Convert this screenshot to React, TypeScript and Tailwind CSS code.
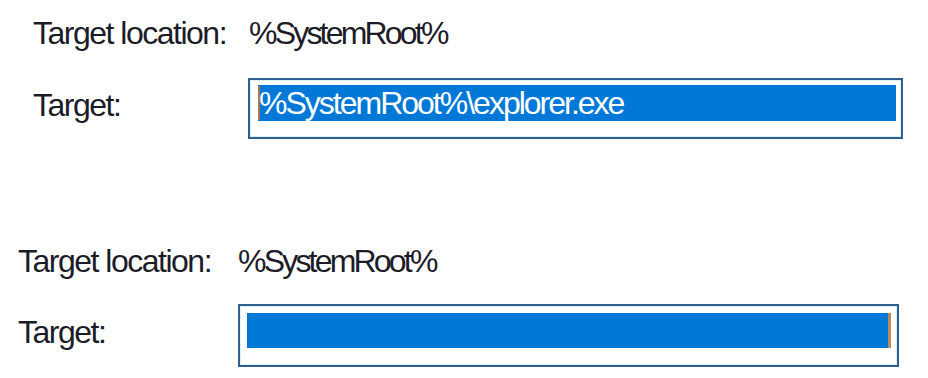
import React from 'react';

const font = "font-['Liberation_Sans','Arial',sans-serif] text-[32px] tracking-[-2px]";

const App: React.FC = () => {
  return (
    <div className={`w-[928px] h-[378px] bg-white overflow-hidden text-[#1c1c28] ${font}`}>
      {/* Selected text */}
      <div className="pt-[17px] pl-[33px]">
        <div className="flex h-[32px] leading-[32px]">
          <span className="w-[216px] tracking-[-1.5px]">Target location:</span>
          <span className="tracking-[-2.8px]">%SystemRoot%</span>
        </div>
        <div className="mt-[29px] flex items-start">
          <span className="w-[215px] mt-[11px] leading-[32px] tracking-[-1.5px]">Target:</span>
          <div className="w-[655px] h-[61px] border-2 border-[#2e5f8e] bg-white shadow-[inset_0_0_0_1px_#d4f4ff] pl-[8px] pt-[5px]">
            <div className="w-[638px] h-[36px] bg-[#0078d7] text-white leading-[36px] flex">
              <span className="w-[2px] h-[34px] mt-[1px] bg-[#a8784e] shrink-0" />
              <span className="-ml-[1px]">%SystemRoot%\explorer.exe</span>
            </div>
          </div>
        </div>
      </div>

      {/* Empty selection */}
      <div className="mt-[106px] pl-[18px]">
        <div className="flex h-[32px] leading-[32px]">
          <span className="w-[220px] tracking-[-1.5px]">Target location:</span>
          <span className="tracking-[-2.8px]">%SystemRoot%</span>
        </div>
        <div className="mt-[27px] flex items-start">
          <span className="w-[220px] mt-[12px] leading-[32px] tracking-[-1.5px]">Target:</span>
          <div className="w-[661px] h-[63px] border-2 border-[#2e5f8e] bg-white shadow-[inset_0_0_0_1px_#d4f4ff] pl-[7px] pt-[7px]">
            <div className="w-[644px] h-[35px] bg-[#0078d7] flex justify-end">
              <span className="w-[3px] h-[35px] bg-[#b88a62]" />
            </div>
          </div>
        </div>
      </div>
    </div>
  );
};

export default App;
